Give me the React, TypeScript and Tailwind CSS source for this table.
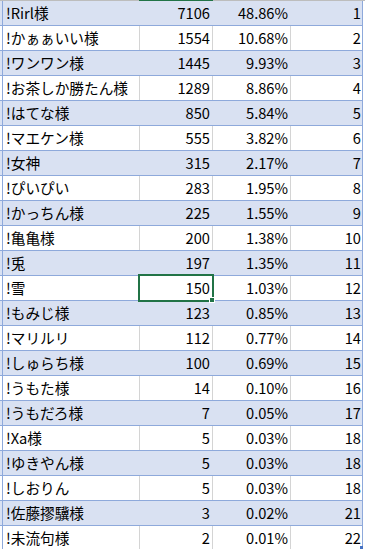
import React from "react";

type Row = { name: string; count: number; pct: string; rank: number };

const rows: Row[] = [
  { name: "!Rirl様", count: 7106, pct: "48.86%", rank: 1 },
  { name: "!かぁぁいい様", count: 1554, pct: "10.68%", rank: 2 },
  { name: "!ワンワン様", count: 1445, pct: "9.93%", rank: 3 },
  { name: "!お茶しか勝たん様", count: 1289, pct: "8.86%", rank: 4 },
  { name: "!はてな様", count: 850, pct: "5.84%", rank: 5 },
  { name: "!マエケン様", count: 555, pct: "3.82%", rank: 6 },
  { name: "!女神", count: 315, pct: "2.17%", rank: 7 },
  { name: "!ぴいぴい", count: 283, pct: "1.95%", rank: 8 },
  { name: "!かっちん様", count: 225, pct: "1.55%", rank: 9 },
  { name: "!亀亀様", count: 200, pct: "1.38%", rank: 10 },
  { name: "!兎", count: 197, pct: "1.35%", rank: 11 },
  { name: "!雪", count: 150, pct: "1.03%", rank: 12 },
  { name: "!もみじ様", count: 123, pct: "0.85%", rank: 13 },
  { name: "!マリルリ", count: 112, pct: "0.77%", rank: 14 },
  { name: "!しゅらち様", count: 100, pct: "0.69%", rank: 15 },
  { name: "!うもた様", count: 14, pct: "0.10%", rank: 16 },
  { name: "!うもだろ様", count: 7, pct: "0.05%", rank: 17 },
  { name: "!Xa様", count: 5, pct: "0.03%", rank: 18 },
  { name: "!ゆきやん様", count: 5, pct: "0.03%", rank: 18 },
  { name: "!しおりん", count: 5, pct: "0.03%", rank: 18 },
  { name: "!佐藤摎驥様", count: 3, pct: "0.02%", rank: 21 },
  { name: "!未流句様", count: 2, pct: "0.01%", rank: 22 },
];

function TableRow({ row, banded }: { row: Row; banded: boolean }) {
  const bg = banded ? "bg-[#d9e1f2]" : "bg-white";
  const grid = banded ? "border-r-[#d9e1f2]" : "border-r-[#d4d4d4]";
  return (
    <div className={`flex h-[25px] w-[363px] border-b border-b-[#8ea9db] pl-[2px] ${bg}`}>
      <div className={`w-[138px] shrink-0 border-l border-r border-l-[#8ea9db] pl-[3px] leading-[23px] ${grid}`}>
        {row.name}
      </div>
      <div className={`w-[73px] shrink-0 border-r pr-[2px] text-right leading-[23px] ${grid}`}>
        {row.count}
      </div>
      <div className={`w-[78px] shrink-0 border-r pr-[2px] text-right leading-[23px] ${grid}`}>
        {row.pct}
      </div>
      <div className="w-[72px] shrink-0 border-r border-r-[#8ea9db] pr-[1px] text-right leading-[23px]">
        {row.rank}
      </div>
    </div>
  );
}

export default function App() {
  return (
    <div
      className="relative h-[549px] w-[365px] overflow-hidden bg-white text-[14.67px] text-black"
      style={{ fontFamily: '"Noto Sans CJK JP", "Noto Sans", sans-serif' }}
    >
      {/* column header bottom edge, column B highlighted */}
      <div className="flex h-px">
        <div className="w-[139px] bg-[#bdbdbd]" />
        <div className="w-[74px] bg-[#217346]" />
        <div className="flex-1 bg-[#bdbdbd]" />
      </div>

      {rows.map((row, i) => (
        <TableRow key={i} row={row} banded={i % 2 === 0} />
      ))}

      {/* active cell */}
      <div className="absolute left-[138px] top-[274px] h-[28px] w-[76px] border-2 border-[#217346]" />
      <div className="absolute left-[209px] top-[297px] h-[6px] w-[6px] border border-white bg-[#217346]" />

      {/* table resize handle */}
      <div className="absolute left-[360px] top-[546px] h-[3px] w-[3px] bg-[#4472c4]" />
    </div>
  );
}
